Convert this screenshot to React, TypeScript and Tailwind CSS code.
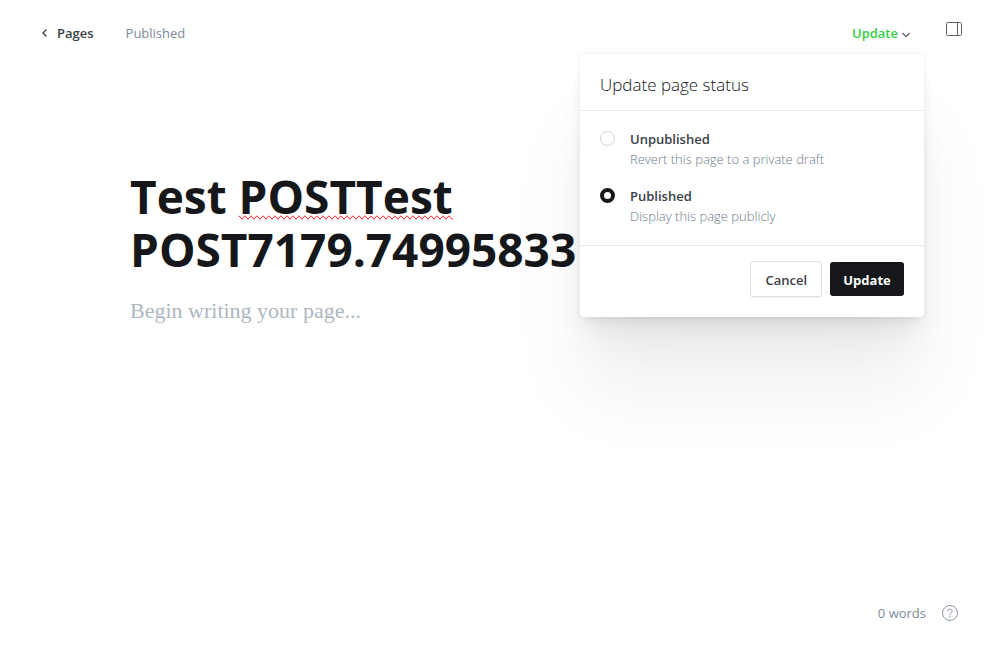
import { useState } from "react";

type Status = "unpublished" | "published";

const options: { value: Status; label: string; hint: string }[] = [
  { value: "unpublished", label: "Unpublished", hint: "Revert this page to a private draft" },
  { value: "published", label: "Published", hint: "Display this page publicly" },
];

function StatusMenu() {
  const [status, setStatus] = useState<Status>("published");
  return (
    <form
      onSubmit={(event) => event.preventDefault()}
      className="absolute top-[34px] -right-3.5 z-10 w-86 rounded bg-white text-[#394047] shadow-[0_0_7px_rgba(0,0,0,0.08),0_2px_2px_-5px_rgba(0,0,0,0.02),0_5px_5px_-5px_rgba(0,0,0,0.025),0_10px_10px_-5px_rgba(0,0,0,0.03),0_17px_18px_-5px_rgba(0,0,0,0.036),0_32px_33px_-5px_rgba(0,0,0,0.04),0_76px_80px_rgba(0,0,0,0.06)]"
    >
      <h2 id="status-title" className="border-b border-[#e9ecee] px-5 pt-[19px] pb-[13px] text-[17px] leading-6 font-light text-[#15171a]">
        Update page status
      </h2>
      <div role="radiogroup" aria-labelledby="status-title" className="flex flex-col gap-[17px] px-5 pt-[18px] pb-[19px]">
        {options.map((option) => (
          <label key={option.value} className="flex items-start gap-[15px]">
            <input
              type="radio"
              name="status"
              checked={status === option.value}
              onChange={() => setStatus(option.value)}
              className="mt-0.5 size-[15px] shrink-0 appearance-none rounded-full border border-[#ced4d9] bg-white checked:border-4 checked:border-[#15171a]"
            />
            <span className="flex flex-col text-[13px] leading-5">
              <span className="font-semibold">{option.label}</span>
              <span className="font-light text-[#6b7b8b]">{option.hint}</span>
            </span>
          </label>
        ))}
      </div>
      <div className="flex items-center justify-end gap-2 border-t border-[#e9ecee] px-5 pt-[15px] pb-5 text-[13px] font-semibold">
        <button
          type="button"
          className="h-9 rounded-[3px] border border-[#dde1e5] bg-white px-3.5 pt-0.5 shadow-[0_1px_1px_rgba(0,0,0,0.05)]"
        >
          Cancel
        </button>
        <button type="submit" className="h-[34px] w-[74px] rounded-[3px] bg-[#15171a] pt-0.5 font-bold text-white">
          Update
        </button>
      </div>
    </form>
  );
}

export default function App() {
  return (
    <div className="flex min-h-screen flex-col bg-white font-['Open_Sans','Noto_Sans',sans-serif] text-[13px] text-[#15171a]">
      <header className="flex items-start justify-between pt-5 pr-[38px] pl-10">
        <nav className="flex items-center gap-8 pt-[3px] leading-5">
          <a href="#pages" className="flex items-center gap-2 font-semibold text-[#394047]">
            <svg viewBox="0 0 9 10" className="h-2.5 w-[9px]" fill="none" stroke="currentColor" strokeWidth="1.3">
              <path d="M6.500 1.500 3 5l3.500 3.500" />
            </svg>
            Pages
          </a>
          <span className="text-[#7c8b9a]">Published</span>
        </nav>
        <div className="flex items-start gap-9">
          <div className="relative pt-[3px] leading-5">
            <button type="button" aria-expanded="true" className="flex items-center gap-1 font-semibold text-[#30cf43]">
              Update
              <svg viewBox="0 0 8 6" className="mt-1 h-1.5 w-2" fill="none" stroke="#5b6268" strokeWidth="1.3">
                <path d="m.5 1 3.500 3.600L7.500 1" />
              </svg>
            </button>
            <StatusMenu />
          </div>
          <button type="button" aria-label="Settings" className="pt-0.5">
            <svg viewBox="0 0 16 14" className="block h-3.5 w-4" fill="none" stroke="#5b6268">
              <rect x=".5" y=".5" width="15" height="13" rx="1" />
              <path d="M11.500 .5v13" />
            </svg>
          </button>
        </div>
      </header>

      <main className="flex w-full max-w-[740px] flex-1 flex-col self-center pt-[127px]">
        <h1
          role="textbox"
          aria-label="Page title"
          contentEditable
          suppressContentEditableWarning
          spellCheck={false}
          className="text-[46px] leading-[53px] font-bold outline-none"
        >
          Test <span className="[text-decoration-line:spelling-error]">POSTTest</span> POST7179.74995833
        </h1>
        <textarea
          aria-label="Page content"
          placeholder="Begin writing your page..."
          className="mt-[19px] h-32 w-full resize-none font-['Liberation_Serif',serif] text-[22px] leading-8 outline-none placeholder:text-[#aeb7c1]"
        />
      </main>

      <footer className="flex items-center justify-end gap-4 pr-[42px] pb-[37px] text-[#7c8b9a]">
        <span>0 words</span>
        <button type="button" aria-label="Help">
          <svg viewBox="0 0 16 16" className="block size-4" fill="none" stroke="#8b98a6">
            <circle cx="8" cy="8" r="7.500" />
            <path d="M5.800 6.200a2.200 2.200 0 1 1 3.200 2Q8 8.700 8 9.600v.6" />
            <circle cx="8" cy="12" r=".3" />
          </svg>
        </button>
      </footer>
    </div>
  );
}
